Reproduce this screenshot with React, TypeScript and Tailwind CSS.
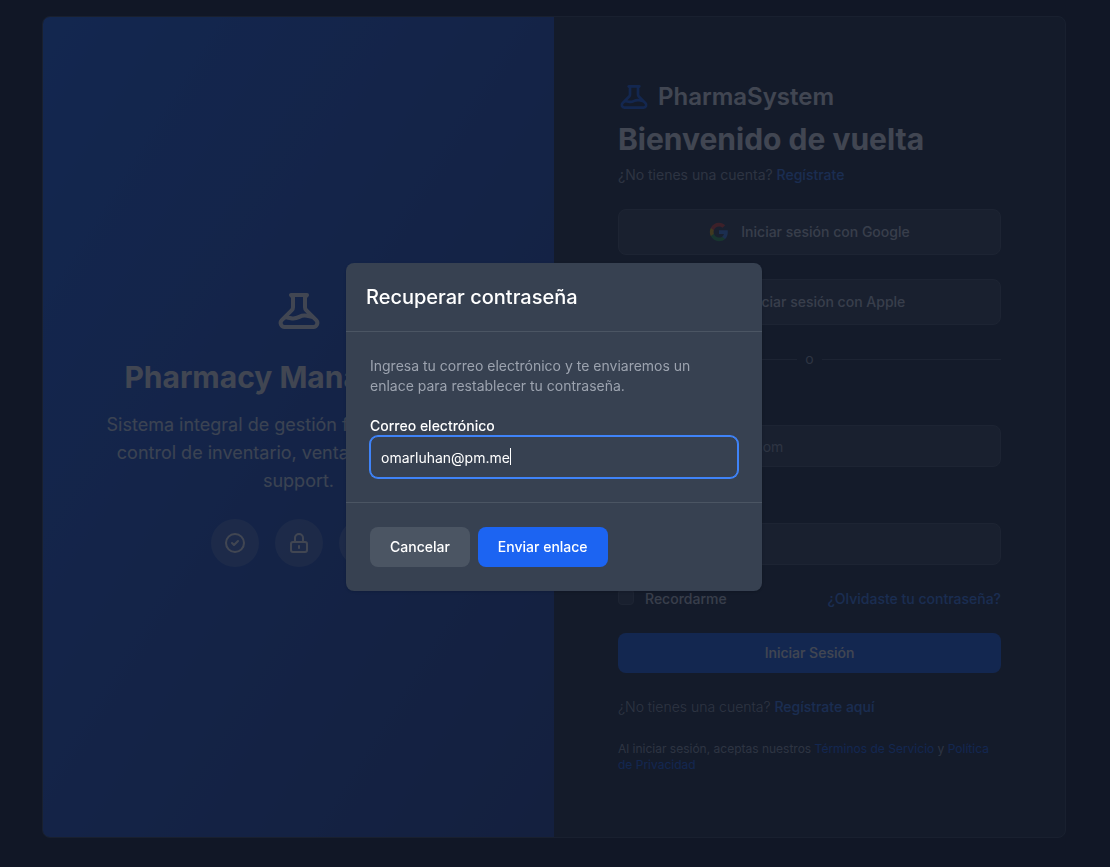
import { useEffect, useRef, type ReactNode } from 'react';

const BEAKER =
  'M19.428 15.428a2 2 0 00-1.022-.547l-2.387-.477a6 6 0 00-3.86.517l-.318.158a6 6 0 01-3.86.517L6.05 15.21a2 2 0 00-1.806.547M8 4h8l-1 1v5.172a2 2 0 00.586 1.414l5 5c1.26 1.26.367 3.414-1.415 3.414H4.828c-1.782 0-2.674-2.154-1.414-3.414l5-5A2 2 0 009 10.172V5L8 4z';

const FEATURES = [
  'M9 12l2 2 4-4m6 2a9 9 0 11-18 0 9 9 0 0118 0z',
  'M12 15v2m-6 4h12a2 2 0 002-2v-6a2 2 0 00-2-2H6a2 2 0 00-2 2v6a2 2 0 002 2zm10-10V7a4 4 0 00-8 0v4h8z',
  'M13 10V3L4 14h7v7l9-11h-7z',
];

function Icon({ d, className }: { d: string; className: string }) {
  return (
    <svg className={className} viewBox="0 0 24 24" fill="none" stroke="currentColor" strokeWidth={2} strokeLinecap="round" strokeLinejoin="round" aria-hidden="true">
      <path d={d} />
    </svg>
  );
}

function GoogleLogo() {
  return (
    <svg className="size-5" viewBox="0 0 24 24" aria-hidden="true">
      <path fill="#4285F4" d="M22.56 12.25c0-.78-.07-1.53-.2-2.25H12v4.26h5.92c-.26 1.37-1.04 2.53-2.21 3.31v2.77h3.57c2.08-1.92 3.28-4.74 3.28-8.09z" />
      <path fill="#34A853" d="M12 23c2.97 0 5.46-.98 7.28-2.66l-3.57-2.77c-.98.66-2.23 1.06-3.71 1.06-2.86 0-5.29-1.93-6.16-4.53H2.18v2.84C3.99 20.53 7.7 23 12 23z" />
      <path fill="#FBBC05" d="M5.84 14.09c-.22-.66-.35-1.36-.35-2.09s.13-1.43.35-2.09V7.07H2.18C1.43 8.55 1 10.22 1 12s.43 3.45 1.18 4.93l3.66-2.84z" />
      <path fill="#EA4335" d="M12 5.38c1.62 0 3.06.56 4.21 1.64l3.15-3.15C17.45 2.09 14.97 1 12 1 7.7 1 3.99 3.47 2.18 7.07l3.66 2.84c.87-2.6 3.3-4.53 6.16-4.53z" />
    </svg>
  );
}

function AppleLogo() {
  return (
    <svg className="size-5" viewBox="0 0 24 24" fill="currentColor" aria-hidden="true">
      <path d="M17.05 20.28c-.98.95-2.05.8-3.08.35-1.09-.46-2.09-.48-3.24 0-1.44.62-2.2.44-3.06-.35C2.79 15.25 3.51 7.59 9.05 7.31c1.35.07 2.29.74 3.08.8 1.18-.24 2.31-.93 3.57-.84 1.51.12 2.65.72 3.4 1.8-3.12 1.87-2.38 5.98.48 7.13-.57 1.5-1.31 2.99-2.54 4.09zM12.03 7.25c-.15-2.23 1.66-4.07 3.74-4.25.29 2.58-2.34 4.5-3.74 4.25z" />
    </svg>
  );
}

function SocialButton({ icon, children }: { icon: ReactNode; children: ReactNode }) {
  return (
    <button type="button" className="flex w-full items-center justify-center gap-3 rounded-lg border border-[#4b5563] bg-[#374151] px-5 py-3 text-sm font-medium text-[#d1d5db]">
      {icon}
      {children}
    </button>
  );
}

function BrandPanel() {
  return (
    <div className="flex min-w-0 flex-col items-center justify-center bg-linear-to-br from-[#1c64f2] to-[#1e429f] px-15 text-center text-white">
      <Icon d={BEAKER} className="mb-6 size-12" />
      <h2 className="mb-4 text-3xl font-bold whitespace-nowrap">Pharmacy Management</h2>
      <p className="mb-6 text-lg text-[#e1effe]">
        Sistema integral de gestión farmacéutica con control de inventario, ventas con customer support.
      </p>
      <div className="flex gap-4">
        {FEATURES.map((d) => (
          <div key={d} className="flex size-12 items-center justify-center rounded-full bg-white/20">
            <Icon d={d} className="size-6" />
          </div>
        ))}
      </div>
    </div>
  );
}

function LoginPanel() {
  const field = 'h-[42px] w-full rounded-lg border border-[#4b5563] bg-[#374151] px-2.5 text-sm text-white placeholder-[#9ca3af]';
  return (
    <div className="flex min-w-0 flex-col gap-6 p-16 text-sm">
      <header className="flex flex-col gap-2">
        <div className="flex items-center gap-2">
          <Icon d={BEAKER} className="size-8 text-[#1c64f2]" />
          <span className="text-2xl font-semibold text-white">PharmaSystem</span>
        </div>
        <h1 className="text-3xl font-bold text-white">Bienvenido de vuelta</h1>
        <p className="text-[#9ca3af]">
          ¿No tienes una cuenta?{' '}
          <a href="#registro" className="font-medium text-[#3f83f8]">Regístrate</a>
        </p>
      </header>
      <SocialButton icon={<GoogleLogo />}>Iniciar sesión con Google</SocialButton>
      <SocialButton icon={<AppleLogo />}>Iniciar sesión con Apple</SocialButton>
      <div className="flex items-center">
        <div className="h-px flex-1 bg-[#4b5563]" />
        <span className="px-2 text-[#9ca3af]">o</span>
        <div className="h-px flex-1 bg-[#4b5563]" />
      </div>
      <form className="flex flex-col gap-6" onSubmit={(e) => e.preventDefault()}>
        <div className="flex flex-col gap-2">
          <label htmlFor="email" className="leading-6 font-medium text-white">Correo electrónico</label>
          <input id="email" type="email" placeholder="nombre@empresa.com" className={field} />
        </div>
        <div className="flex flex-col gap-2">
          <label htmlFor="password" className="leading-6 font-medium text-white">Contraseña</label>
          <input id="password" type="password" className={field} />
        </div>
        <div className="flex items-center justify-between font-medium">
          <label className="flex items-start gap-[11px] text-[#d1d5db]">
            <input type="checkbox" className="size-4 appearance-none rounded-sm border border-[#4b5563] bg-[#374151]" />
            Recordarme
          </label>
          <a href="#recuperar" className="text-[#3f83f8]">¿Olvidaste tu contraseña?</a>
        </div>
        <button type="submit" className="h-10 rounded-lg bg-[#1c64f2] font-medium text-white">Iniciar Sesión</button>
      </form>
      <p className="font-light text-[#9ca3af]">
        ¿No tienes una cuenta?{' '}
        <a href="#registro" className="font-medium text-[#3f83f8]">Regístrate aquí</a>
      </p>
      <p className="text-xs text-[#9ca3af]">
        Al iniciar sesión, aceptas nuestros{' '}
        <a href="#terminos" className="text-[#1c64f2]">Términos de Servicio</a> y{' '}
        <a href="#privacidad" className="text-[#1c64f2]">Política de Privacidad</a>
      </p>
    </div>
  );
}

function RecoverDialog() {
  const input = useRef<HTMLInputElement>(null);
  useEffect(() => {
    const el = input.current;
    if (!el) return;
    el.focus();
    el.setSelectionRange(el.value.length, el.value.length);
  }, []);
  return (
    <div className="fixed inset-0 flex items-center justify-center bg-[#111827]/80 pr-0.5 pb-[13px]">
      <form role="dialog" aria-modal="true" aria-labelledby="recover-title" onSubmit={(e) => e.preventDefault()} className="w-full max-w-[416px] rounded-lg bg-[#374151] text-sm text-white shadow">
        <header className="border-b border-[#4b5563] p-5">
          <h3 id="recover-title" className="text-xl font-medium">Recuperar contraseña</h3>
        </header>
        <div className="flex flex-col p-6">
          <p className="mb-5 text-[#9ca3af]">Ingresa tu correo electrónico y te enviaremos un enlace para restablecer tu contraseña.</p>
          <label htmlFor="recover-email" className="font-medium">Correo electrónico</label>
          <div className="relative flex">
            <input
              ref={input}
              id="recover-email"
              type="text"
              inputMode="email"
              defaultValue="omarluhan@pm.me"
              className="h-[42px] w-full rounded-lg border border-[#3f83f8] bg-[#374151] px-2.5 caret-transparent ring-1 ring-[#3f83f8] outline-none"
            />
            <span className="absolute top-3 left-[140px] h-[17px] w-px bg-white" aria-hidden="true" />
          </div>
        </div>
        <footer className="flex gap-2 border-t border-[#4b5563] p-6">
          <button type="button" className="h-10 rounded-lg bg-[#4b5563] px-5 font-medium">Cancelar</button>
          <button type="submit" className="h-10 rounded-lg bg-[#1c64f2] px-5 font-medium">Enviar enlace</button>
        </footer>
      </form>
    </div>
  );
}

export default function App() {
  return (
    <div className="min-h-screen bg-[#111827] pt-4 pr-[18px] pb-4 pl-4 font-['Inter',sans-serif]">
      <main className="mx-auto grid max-w-5xl grid-cols-2 overflow-hidden rounded-lg border border-[#374151] bg-[#1f2937] shadow">
        <BrandPanel />
        <LoginPanel />
      </main>
      <RecoverDialog />
    </div>
  );
}
